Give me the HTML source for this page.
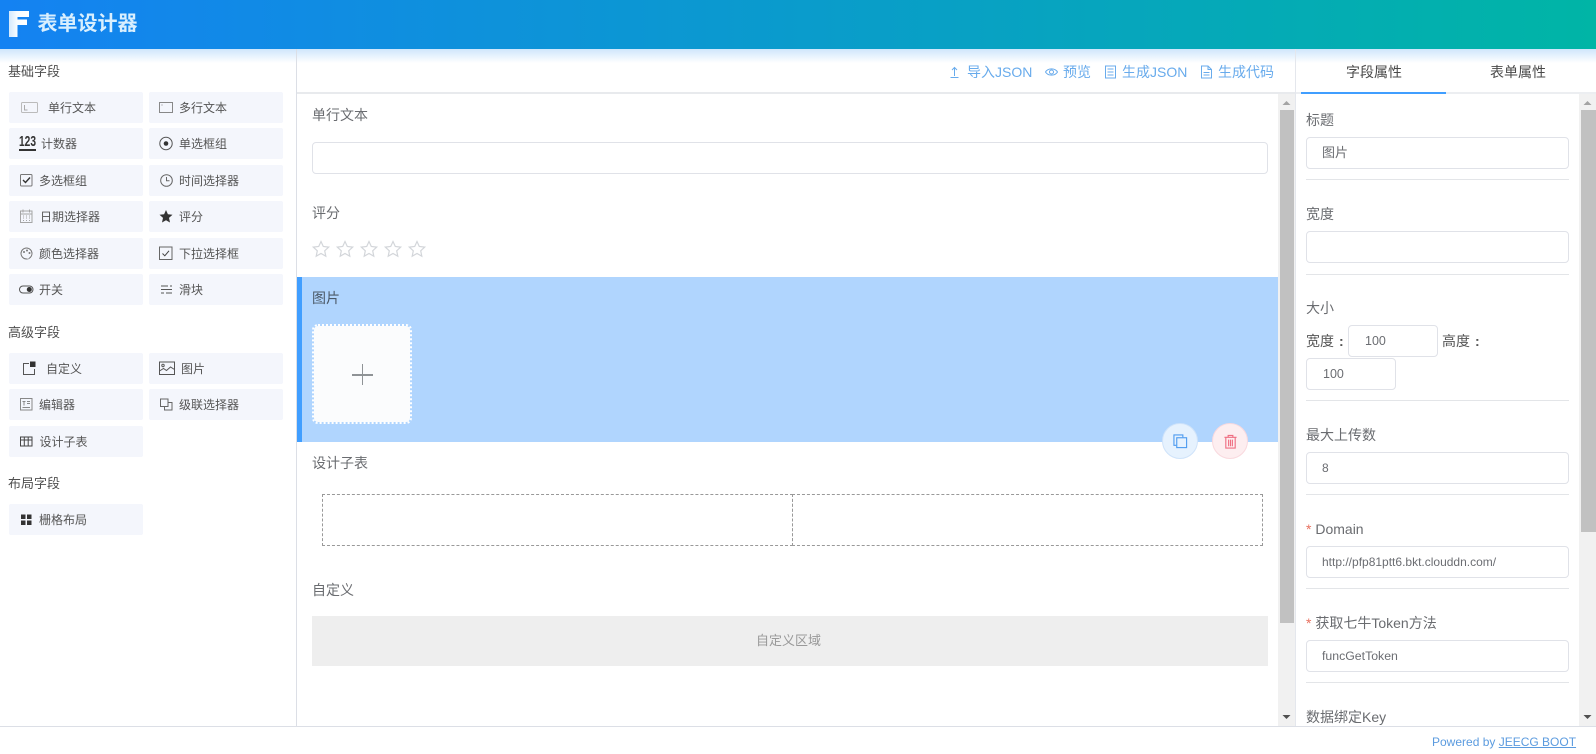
<!DOCTYPE html>
<html lang="zh"><head><meta charset="utf-8"><title>表单设计器</title>
<style>
*{box-sizing:border-box;margin:0;padding:0}
html,body{width:1596px;height:754px;overflow:hidden;background:#fff}
body{position:relative;font-family:"Liberation Sans","Noto Sans CJK SC",sans-serif;font-size:14px;color:#595959}
.a{position:absolute}
.t{position:absolute;white-space:nowrap;line-height:20px;height:20px}
.head{left:0;top:0;width:1596px;height:49px;background:linear-gradient(to right,#1482f2,#00b5a6);z-index:5}
.glow{left:0;top:49px;width:1596px;height:14px;background:linear-gradient(to bottom,#cfe6fc,#fff);z-index:1}
.sec{position:absolute;left:8px;font-size:13px;color:#4f4f4f;line-height:20px;white-space:nowrap;z-index:2}
.it{position:absolute;width:134px;height:31px;background:#f4f6fc;border-radius:2px}
.c1{left:9px}.c2{left:149px}
.it span{position:absolute;top:5.500px;line-height:20px;font-size:12px;color:#555;white-space:nowrap}
.it svg{position:absolute;top:7px;left:0}
.in{position:absolute;border:1px solid #e0e2e8;border-radius:4px;background:#fff;height:32px;line-height:30px;color:#6b6d72;font-size:12px;white-space:nowrap}
.hr{position:absolute;left:1306px;width:263px;height:1px;background:#e3e5e8}
.lb{position:absolute;line-height:20px;color:#6a6c70;white-space:nowrap}
.tb{position:absolute;top:62px;line-height:20px;color:#68abec;white-space:nowrap;z-index:2}
.star{position:absolute;top:240px}
.sb{position:absolute;width:17px;background:#f1f1f1}
.th{position:absolute;background:#c1c1c1}
.req{color:#e8705f}
.col{margin-left:5px;font-weight:bold}
</style></head><body>

<div class="a head">
<svg class="a" style="left:9px;top:11px" width="21" height="27" viewBox="0 0 21 27"><defs><linearGradient id="f" x1="0" y1="0" x2="1" y2="0"><stop offset="0" stop-color="#d4e9fd"/><stop offset=".4" stop-color="#f8fcff"/><stop offset="1" stop-color="#fff"/></linearGradient></defs><path d="M0 0H20V6H8.500V8.500H18V14H8.500V26H0Z" fill="url(#f)"/></svg>
<div class="t" style="left:37.500px;top:10px;height:28px;line-height:28px;font-size:20px;font-weight:bold;color:#d9effe">表单设计器</div>
</div>
<div class="a glow"></div>

<!-- sidebar -->
<div class="a" style="left:296px;top:49px;width:1px;height:677px;background:#dcdfe6;z-index:2"></div>
<div class="sec" style="top:62px">基础字段</div>

<div class="it c1" style="top:92px"><svg style="left:12px" width="17" height="17" viewBox="0 0 17 17" fill="none" stroke="#bbb"><rect x=".5" y="3.500" width="16" height="10" rx="1"/><path d="M3.500 6v5h3" stroke="#aaa"/></svg><span style="left:39px">单行文本</span></div>
<div class="it c2" style="top:92px"><svg style="left:10px" width="14" height="17" viewBox="0 0 14 17" fill="none" stroke="#888"><rect x=".5" y="3.500" width="13" height="10"/><path d="M2.500 6h1" /></svg><span style="left:30px">多行文本</span></div>

<div class="it c1" style="top:128px"><div class="a" style="left:10px;top:5px;font:bold 15px/18px 'Liberation Sans';color:#333;transform:scaleX(.68);transform-origin:left">123</div><div class="a" style="left:10px;top:21px;width:17px;height:2px;background:#333"></div><span style="left:32px">计数器</span></div>
<div class="it c2" style="top:128px"><svg style="left:10px" width="14" height="17" viewBox="0 0 14 17" fill="none"><circle cx="7" cy="8.500" r="6.200" stroke="#555"/><circle cx="7" cy="8.500" r="2.300" fill="#333"/></svg><span style="left:30px">单选框组</span></div>

<div class="it c1" style="top:165px"><svg style="left:11px" width="13" height="17" viewBox="0 0 13 17" fill="none"><rect x=".5" y="2.500" width="11.500" height="11.500" rx="1" stroke="#777"/><path d="M3 8l2.500 2.500 4.500-5" stroke="#333" stroke-width="1.400"/></svg><span style="left:30px">多选框组</span></div>
<div class="it c2" style="top:165px"><svg style="left:11px" width="13" height="17" viewBox="0 0 13 17" fill="none" stroke="#666"><circle cx="6.500" cy="8.500" r="5.800"/><path d="M6.500 5v3.800h3"/></svg><span style="left:30px">时间选择器</span></div>

<div class="it c1" style="top:201px"><svg style="left:11px" width="13" height="17" viewBox="0 0 13 17" fill="none" stroke="#a5a5a5"><rect x=".5" y="3" width="11.500" height="11.500"/><path d="M3 1.500v3M9.500 1.500v3M.5 6h11.500M3 8h1M6 8h1M9 8h1M3 10h1M6 10h1M9 10h1M3 12.500h1M6 12.500h1M9 12.500h1"/></svg><span style="left:31px">日期选择器</span></div>
<div class="it c2" style="top:201px"><svg style="left:10px" width="14" height="17" viewBox="0 0 14 17"><path d="M7 2l1.900 4.300 4.600.5-3.500 3.100 1 4.600L7 12.200 3 14.500l1-4.600L.5 6.800l4.600-.5z" fill="#333"/></svg><span style="left:30px">评分</span></div>

<div class="it c1" style="top:238px"><svg style="left:11px" width="13" height="17" viewBox="0 0 13 17" fill="none"><circle cx="6.500" cy="8.500" r="5.500" stroke="#777"/><circle cx="4" cy="7" r="1" fill="#777"/><circle cx="7" cy="5.500" r="1" fill="#777"/><circle cx="9.500" cy="8" r="1" fill="#777"/><path d="M6.500 10.500l2 3" stroke="#f4f6fc" stroke-width="2"/></svg><span style="left:30px">颜色选择器</span></div>
<div class="it c2" style="top:238px"><svg style="left:10px" width="14" height="17" viewBox="0 0 14 17" fill="none"><rect x=".5" y="2" width="12.500" height="12.500" stroke="#666"/><path d="M3.500 8.500l2.300 2.300 4.200-5" stroke="#444"/></svg><span style="left:30px">下拉选择框</span></div>

<div class="it c1" style="top:274px"><svg style="left:10px" width="15" height="17" viewBox="0 0 15 17" fill="none"><rect x=".5" y="5" width="13.500" height="7" rx="3.500" stroke="#555"/><circle cx="10.300" cy="8.500" r="2.500" fill="#333"/></svg><span style="left:30px">开关</span></div>
<div class="it c2" style="top:274px"><svg style="left:11px" width="13" height="17" viewBox="0 0 13 17" fill="none" stroke="#555"><path d="M1 5h7M10 5h2M1 8.500h11M1 12h3M6 12h6"/></svg><span style="left:30px">滑块</span></div>

<div class="sec" style="top:323px">高级字段</div>
<div class="it c1" style="top:353px"><svg style="left:14px" width="13" height="17" viewBox="0 0 13 17" fill="none"><path d="M6 3.500H.5v11h11V9" stroke="#555"/><rect x="7" y="1.500" width="5.500" height="5.500" fill="#333"/></svg><span style="left:37px">自定义</span></div>
<div class="it c2" style="top:353px"><svg style="left:10px" width="16" height="17" viewBox="0 0 16 17" fill="none" stroke="#555"><rect x=".5" y="2" width="15" height="12.500"/><circle cx="4" cy="5.500" r="1.200"/><path d="M.5 11l4-2.500 3 2 4-3.500 4 2.500"/></svg><span style="left:32px">图片</span></div>

<div class="it c1" style="top:389px"><svg style="left:11px" width="13" height="17" viewBox="0 0 13 17" fill="none" stroke="#888"><rect x=".5" y="2.500" width="11.500" height="11.500"/><path d="M2.500 5.500h3M4 5.500v4M7 5.500h3M7 7.500h3M2.500 11.500h7.500"/></svg><span style="left:30px">编辑器</span></div>
<div class="it c2" style="top:389px"><svg style="left:11px" width="13" height="17" viewBox="0 0 13 17" fill="none" stroke="#666"><rect x=".5" y="3" width="7.500" height="7.500"/><path d="M8 6.500h4V14H4.500v-3.500"/></svg><span style="left:30px">级联选择器</span></div>

<div class="it c1" style="top:426px"><svg style="left:11px" width="13" height="17" viewBox="0 0 13 17" fill="none" stroke="#444"><rect x=".5" y="4" width="11.500" height="9"/><path d="M.5 7h11.500M4.300 4v9M8.200 4v9"/></svg><span style="left:30.500px">设计子表</span></div>

<div class="sec" style="top:474px">布局字段</div>
<div class="it c1" style="top:504px"><svg style="left:11px" width="13" height="17" viewBox="0 0 13 17" fill="#333"><rect x="1" y="3.500" width="4.500" height="4.500"/><rect x="7" y="3.500" width="4.500" height="4.500"/><rect x="1" y="9.500" width="4.500" height="4.500"/><rect x="7" y="9.500" width="4.500" height="4.500"/></svg><span style="left:30px">栅格布局</span></div>

<!-- toolbar -->
<div class="a" style="left:297px;top:92px;width:999px;height:2px;background:#e8eaed"></div>
<div class="a" style="left:1295px;top:49px;width:1px;height:677px;background:#e4e7ed;z-index:2"></div>
<svg class="a" style="left:949px;top:65px;z-index:2" width="11" height="14" viewBox="0 0 11 14" fill="none" stroke="#68abec"><path d="M5.500 11V2.500M3 5l2.500-2.500L8 5M1.500 12.500h8"/></svg>
<div class="tb" style="left:967px">导入JSON</div>
<svg class="a" style="left:1045px;top:65px;z-index:2" width="13" height="14" viewBox="0 0 13 14" fill="none" stroke="#68abec"><path d="M.5 7C3 2.800 10 2.800 12.500 7 10 11.200 3 11.200.5 7z"/><circle cx="6.500" cy="7" r="2"/></svg>
<div class="tb" style="left:1063px">预览</div>
<svg class="a" style="left:1105px;top:65px;z-index:2" width="11" height="14" viewBox="0 0 11 14" fill="none" stroke="#68abec"><rect x=".5" y="1" width="10" height="12"/><path d="M2.500 4h6M2.500 7h6M2.500 10h6"/></svg>
<div class="tb" style="left:1122px">生成JSON</div>
<svg class="a" style="left:1201px;top:65px;z-index:2" width="11" height="14" viewBox="0 0 11 14" fill="none" stroke="#68abec"><path d="M.5 1H7l3.500 3.500V13H.5zM7 1v3.500h3.500M2.500 7.500h6M2.500 10h6"/></svg>
<div class="tb" style="left:1218px">生成代码</div>

<!-- form -->
<div class="lb" style="left:312px;top:105px">单行文本</div>
<div class="in" style="left:312px;top:142px;width:956px"></div>
<div class="lb" style="left:312px;top:203px">评分</div>
<svg class="star" style="left:312px" width="115" height="18" viewBox="0 0 115 18" fill="#fff" stroke="#d3d6da" stroke-width="1.200"><defs><path id="s" d="M9 1.500l2.300 5 5.400.6-4 3.700 1.100 5.400L9 13.500l-4.800 2.700 1.100-5.400-4-3.700 5.400-.6z"/></defs><use href="#s"/><use href="#s" x="24"/><use href="#s" x="48"/><use href="#s" x="72"/><use href="#s" x="96"/></svg>

<div class="a" style="left:297px;top:277px;width:982px;height:165px;background:#b0d5fe;border-left:5px solid #409eff"></div>
<div class="lb" style="left:312px;top:288px;color:#4c5a68">图片</div>
<div class="a" style="left:312px;top:324px;width:100px;height:100px;background:#fbfcfd;background-clip:padding-box;border:2px dotted #fff;border-radius:6px"></div>
<div class="a" style="left:352px;top:374px;width:21px;height:1.500px;background:#8f9396"></div>
<div class="a" style="left:361.500px;top:364px;width:1.500px;height:21px;background:#8f9396"></div>

<div class="a" style="left:1162px;top:423px;width:36px;height:36px;border-radius:50%;background:#e6f2fe;border:1px solid #cfe3fa;z-index:2"></div>
<svg class="a" style="left:1173px;top:434px;z-index:3" width="15" height="15" viewBox="0 0 16 16" fill="none" stroke="#4f9cf0" stroke-width="1.200"><path d="M3.500 12H1V1h9.500v2.500"/><rect x="4" y="4" width="10.500" height="10.500"/></svg>
<div class="a" style="left:1212px;top:423px;width:36px;height:36px;border-radius:50%;background:#fdeef0;border:1px solid #f9d9de;z-index:2"></div>
<svg class="a" style="left:1223px;top:434px;z-index:3" width="15" height="15" viewBox="0 0 16 16" fill="none" stroke="#ef6f82" stroke-width="1.200"><path d="M1.500 3.500h13M5.500 3.500V1.500h5v2M3 3.500V15h10V3.500M6 6v7M8 6v7M10 6v7"/></svg>

<div class="lb" style="left:312px;top:453px">设计子表</div>
<div class="a" style="left:322px;top:494px;width:471px;height:52px;border:1px dashed #999"></div>
<div class="a" style="left:792px;top:494px;width:471px;height:52px;border:1px dashed #999"></div>
<div class="lb" style="left:312px;top:580px">自定义</div>
<div class="a" style="left:312px;top:616px;width:956px;height:50px;background:#eee;text-align:center;line-height:50px;color:#999;font-size:13px;padding-right:3px">自定义区域</div>

<!-- center scrollbar -->
<div class="sb" style="left:1278px;top:94px;height:632px"></div>
<div class="th" style="left:1279.500px;top:110px;width:14px;height:513px"></div>
<svg class="a" style="left:1278px;top:94px" width="17" height="632"><path d="M8.500 7l-4 4h8z" fill="#a3a3a3"/><path d="M4.500 621h8l-4 4z" fill="#505050"/></svg>

<!-- right panel -->
<div class="a" style="left:1296px;top:92px;width:300px;height:2px;background:#eceef1"></div>
<div class="a" style="left:1301px;top:92px;width:145px;height:2px;background:#409eff"></div>
<div class="t" style="left:1346px;top:62px;color:#4a4a4a;z-index:2">字段属性</div>
<div class="t" style="left:1490px;top:62px;color:#4a4a4a;z-index:2">表单属性</div>

<div class="lb" style="left:1306px;top:110px">标题</div>
<div class="in" style="left:1306px;top:137px;width:263px;padding-left:15px;font-size:13px">图片</div>
<div class="hr" style="top:179px"></div>
<div class="lb" style="left:1306px;top:204px">宽度</div>
<div class="in" style="left:1306px;top:231px;width:263px"></div>
<div class="hr" style="top:274px"></div>
<div class="lb" style="left:1306px;top:298px">大小</div>
<div class="lb" style="left:1306px;top:331px;color:#555">宽度<span class="col">:</span></div>
<div class="in" style="left:1348px;top:325px;width:90px;padding-left:16px;font-size:12.500px">100</div>
<div class="lb" style="left:1442px;top:331px;color:#555">高度<span class="col">:</span></div>
<div class="in" style="left:1306px;top:358px;width:90px;padding-left:16px;font-size:12.500px">100</div>
<div class="hr" style="top:400px"></div>
<div class="lb" style="left:1306px;top:425px">最大上传数</div>
<div class="in" style="left:1306px;top:452px;width:263px;padding-left:15px">8</div>
<div class="hr" style="top:494px"></div>
<div class="lb" style="left:1306px;top:519px"><span class="req">*</span> Domain</div>
<div class="in" style="left:1306px;top:546px;width:263px;padding-left:15px">http://pfp81ptt6.bkt.clouddn.com/</div>
<div class="hr" style="top:588px"></div>
<div class="lb" style="left:1306px;top:613px"><span class="req">*</span> 获取七牛Token方法</div>
<div class="in" style="left:1306px;top:640px;width:263px;padding-left:15px;font-size:12.300px">funcGetToken</div>
<div class="hr" style="top:682px"></div>
<div class="lb" style="left:1306px;top:707px;height:19px;overflow:hidden">数据绑定Key</div>

<div class="sb" style="left:1579px;top:94px;height:632px"></div>
<div class="th" style="left:1581px;top:110px;width:15px;height:422px"></div>
<svg class="a" style="left:1579px;top:94px" width="17" height="632"><path d="M8.500 7l-4 4h8z" fill="#a3a3a3"/><path d="M4.500 621h8l-4 4z" fill="#505050"/></svg>

<!-- footer -->
<div class="a" style="left:0;top:726px;width:1596px;height:28px;background:#fff;border-top:1px solid #dcdfe6"></div>
<div class="t" style="left:1432px;top:732px;font-size:12px;color:#5b9bdf">Powered by <span style="text-decoration:underline">JEECG BOOT</span></div>
</body></html>
